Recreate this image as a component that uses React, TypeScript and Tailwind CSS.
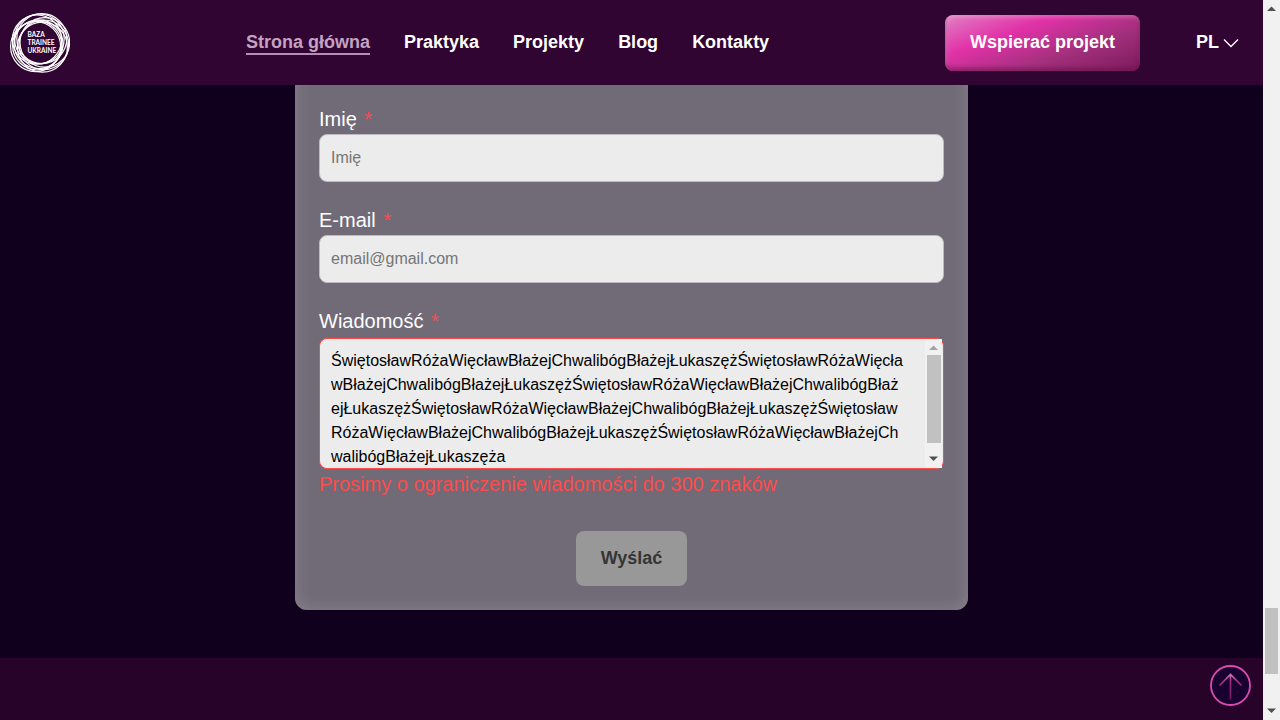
import { useState } from "react";

const navItems = [
  { label: "Strona główna", active: true },
  { label: "Praktyka", active: false },
  { label: "Projekty", active: false },
  { label: "Blog", active: false },
  { label: "Kontakty", active: false },
];

const initialMessage =
  "ŚwiętosławRóżaWięcławBłażejChwalibógBłażejŁukaszężŚwiętosławRóżaWięcławBłażejChwalibógBłażejŁukaszężŚwiętosławRóżaWięcławBłażejChwalibógBłażejŁukaszężŚwiętosławRóżaWięcławBłażejChwalibógBłażejŁukaszężŚwiętosławRóżaWięcławBłażejChwalibógBłażejŁukaszężŚwiętosławRóżaWięcławBłażejChwalibógBłażejŁukaszęża";

const rings = [
  { cx: 25.6, cy: 33.6, r: 25 },
  { cx: 27.2, cy: 32.4, r: 24.6 },
  { cx: 28.6, cy: 31.2, r: 24.4 },
  { cx: 27, cy: 26.6, r: 24.6 },
  { cx: 29.4, cy: 25.8, r: 24.8 },
  { cx: 31.8, cy: 25.6, r: 25 },
  { cx: 34.8, cy: 29.4, r: 24.8 },
  { cx: 33.8, cy: 31.8, r: 24.8 },
  { cx: 32.4, cy: 34.2, r: 25 },
];

function Logo() {
  return (
    <a href="#home" aria-label="Baza Trainee Ukraine" className="block shrink-0">
      <svg viewBox="0 0 60 60" className="h-[60px] w-[60px]" fill="none">
        {rings.map((ring) => (
          <circle key={`${ring.cx}-${ring.cy}`} cx={ring.cx} cy={ring.cy} r={ring.r} stroke="#fff" strokeWidth="1.2" />
        ))}
        <g fill="#fff" fontFamily="Lato, 'Liberation Sans', sans-serif" fontSize="6.5" fontWeight="700">
          <text x="17.5" y="24">BAZA</text>
          <text x="17.5" y="32">TRAINEE</text>
          <text x="17.5" y="39.5">UKRAINE</text>
        </g>
      </svg>
    </a>
  );
}

function Header() {
  return (
    <header className="relative z-10 flex h-[85px] shrink-0 items-center bg-[#300532] pl-[10px] pr-6 text-lg font-bold text-white">
      <Logo />
      <nav className="ml-[176px] flex gap-[34px]">
        {navItems.map((item) => (
          <a
            key={item.label}
            href="#section"
            className={
              item.active
                ? "border-b-2 border-[#b38fb5] pt-0.5 leading-[21px] text-[#c4a2c0]"
                : "border-b-2 border-transparent pt-0.5 leading-[21px]"
            }
          >
            {item.label}
          </a>
        ))}
      </nav>
      <button
        type="button"
        className="ml-auto h-14 rounded-lg bg-[linear-gradient(160deg,#e081c4_0%,#e232a8_32%,#a3307d_65%,#7c1a5b_100%)] px-[25px] pb-0.5 shadow-[inset_0_-3px_4px_#6b0f4d99,inset_2px_2px_4px_#ffffff40]"
      >
        Wspierać projekt
      </button>
      <button type="button" className="ml-14 flex items-center gap-1 pb-0.5">
        PL
        <svg viewBox="0 0 16 10" className="mt-0.5 h-[10px] w-4" fill="none" stroke="#fff" strokeWidth="1.3">
          <path d="M1 1.5 8 8.5 15 1.5" />
        </svg>
      </button>
    </header>
  );
}

function FieldLabel({ htmlFor, children }: { htmlFor: string; children: string }) {
  return (
    <label htmlFor={htmlFor} className="block text-xl leading-[30px] text-white">
      {children} <span className="ml-0.5 text-[#f84b50]">*</span>
    </label>
  );
}

const inputClass =
  "block h-12 w-full rounded-lg border border-[#c0bac4] bg-[#ececec] px-[11px] text-base text-black outline-none placeholder:text-[#757575]";

function ContactForm() {
  const [message, setMessage] = useState(initialMessage);
  return (
    <form className="mx-auto -mt-8 w-full max-w-[673px] rounded-xl bg-[#716b78] px-6 pb-6 pt-[51px] shadow-[inset_0_0_16px_#8a838c]">
      <FieldLabel htmlFor="name">Imię</FieldLabel>
      <input id="name" type="text" placeholder="Imię" className={inputClass} />
      <div className="mt-[23px]">
        <FieldLabel htmlFor="email">E-mail</FieldLabel>
        <input id="email" type="email" placeholder="email@gmail.com" className={inputClass} />
      </div>
      <div className="mt-[23px]">
        <FieldLabel htmlFor="message">Wiadomość</FieldLabel>
        <div className="mt-0.5 flex h-[131px] rounded-lg border border-[#ff4a4a] bg-[#ececec] pr-px">
          <textarea
            id="message"
            aria-describedby="message-error"
            value={message}
            onChange={(e) => setMessage(e.target.value)}
            className="min-w-0 flex-1 resize-none overflow-hidden bg-transparent pl-[11px] pr-5 pt-[10px] text-base text-black outline-none"
          />
          <ScrollBar small />
        </div>
        <p id="message-error" className="text-xl leading-[30px] text-[#ff4a4a]">
          Prosimy o ograniczenie wiadomości do 300 znaków
        </p>
      </div>
      <div className="mt-8 flex justify-center">
        <button type="submit" className="h-[55px] rounded-lg bg-[#989898] px-[25px] pb-0.5 text-lg font-bold text-[#353535]">
          Wyślać
        </button>
      </div>
    </form>
  );
}

function ScrollBar({ small = false }: { small?: boolean }) {
  return (
    <div aria-hidden="true" className="flex w-[17px] shrink-0 flex-col items-center bg-[#f1f1f1]">
      <svg viewBox="0 0 17 16" className="h-4 w-[17px] shrink-0">
        <path d="M4 11 8.5 6.5 13 11Z" fill={small ? "#a3a3a3" : "#505050"} />
      </svg>
      {small ? (
        <div className="h-[88px] w-[14px] bg-[#c1c1c1]" />
      ) : (
        <>
          <div className="flex-[592]" />
          <div className="w-[13px] flex-[66] bg-[#c1c1c1]" />
          <div className="flex-[29]" />
        </>
      )}
      <svg viewBox="0 0 17 17" className="mt-auto h-[17px] w-[17px] shrink-0">
        <path d="M4 5.5 8.5 10 13 5.5Z" fill="#505050" />
      </svg>
    </div>
  );
}

export default function App() {
  return (
    <div className="flex min-h-screen bg-[#10001e] font-['Liberation_Sans',Arial,sans-serif]">
      <div className="flex min-w-0 flex-1 flex-col">
        <Header />
        <main className="pb-12">
          <ContactForm />
        </main>
        <footer className="flex flex-1 items-start justify-end bg-[#280329] pr-[11px] pt-[7px]">
          <a href="#home" aria-label="Do góry">
            <svg viewBox="0 0 42 42" className="h-[42px] w-[42px]" fill="none">
              <defs>
                <linearGradient id="arrow" gradientUnits="userSpaceOnUse" x1="21" y1="8" x2="21" y2="36">
                  <stop stopColor="#d783c0" />
                  <stop offset="0.3" stopColor="#ab2f88" />
                  <stop offset="1" stopColor="#6d1758" />
                </linearGradient>
              </defs>
              <circle cx="20.5" cy="20.5" r="19.5" fill="#1a0030" stroke="#d94bb0" strokeWidth="1.8" />
              <path d="M20.5 34.5V9.5M9.5 20.5 20.5 9.5 31.5 20.5" stroke="url(#arrow)" strokeWidth="1.6" />
            </svg>
          </a>
        </footer>
      </div>
      <ScrollBar />
    </div>
  );
}
